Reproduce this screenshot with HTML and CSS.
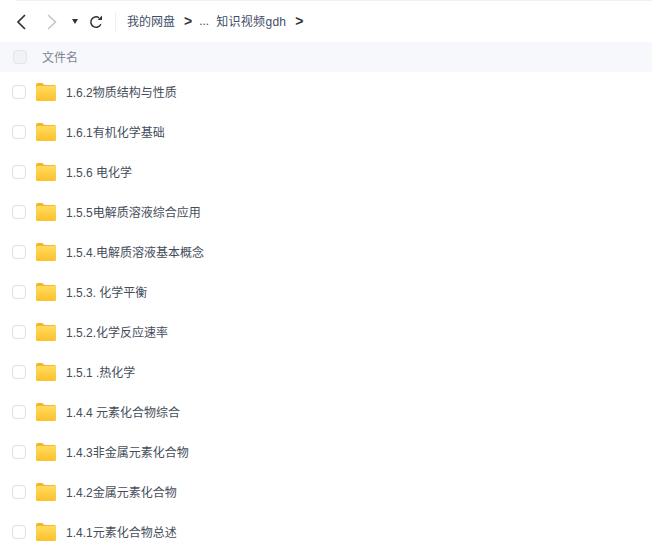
FILE: index.html
```html
<!DOCTYPE html>
<html lang="zh-CN">

<head>
    <meta charset="UTF-8">
    <title>我的网盘</title>
    <link rel="stylesheet" href="styles.css">
</head>

<body>
    <div class="toolbar">
        <div class="nav">
            <svg class="nav-back" width="12" height="16" viewBox="0 0 12 16"><path d="M9 1 2 8l7 7" fill="none" stroke="#333" stroke-width="1.7"/></svg>
            <svg class="nav-forward" width="12" height="16" viewBox="0 0 12 16"><path d="M2 1 9.5 8 2 15" fill="none" stroke="#c4c4c4" stroke-width="1.5"/></svg>
            <span class="nav-drop"></span>
            <svg class="nav-refresh" width="14" height="14" viewBox="0 0 14 14"><path d="M11.8 9.2A5.2 5.2 0 1 1 10 2.8" fill="none" stroke="#333" stroke-width="1.5"/><path d="M8.6 5h4.4V.6z" fill="#333"/></svg>
        </div>
        <div class="crumbs">
            <span>我的网盘</span>
            <span class="sep">&gt;</span>
            <span class="dots">...</span>
            <span class="last">知识视频gdh</span>
            <span class="sep">&gt;</span>
        </div>
    </div>

    <div class="list-head">
        <span class="check check-head"></span>
        <span class="head-name">文件名</span>
    </div>

    <div class="list">
        <div class="row"><span class="check"></span><svg class="folder"><use href="#folder"/></svg><span class="name">1.6.2物质结构与性质</span></div>
        <div class="row"><span class="check"></span><svg class="folder"><use href="#folder"/></svg><span class="name">1.6.1有机化学基础</span></div>
        <div class="row"><span class="check"></span><svg class="folder"><use href="#folder"/></svg><span class="name">1.5.6 电化学</span></div>
        <div class="row"><span class="check"></span><svg class="folder"><use href="#folder"/></svg><span class="name">1.5.5电解质溶液综合应用</span></div>
        <div class="row"><span class="check"></span><svg class="folder"><use href="#folder"/></svg><span class="name">1.5.4.电解质溶液基本概念</span></div>
        <div class="row"><span class="check"></span><svg class="folder"><use href="#folder"/></svg><span class="name">1.5.3. 化学平衡</span></div>
        <div class="row"><span class="check"></span><svg class="folder"><use href="#folder"/></svg><span class="name">1.5.2.化学反应速率</span></div>
        <div class="row"><span class="check"></span><svg class="folder"><use href="#folder"/></svg><span class="name">1.5.1 .热化学</span></div>
        <div class="row"><span class="check"></span><svg class="folder"><use href="#folder"/></svg><span class="name">1.4.4 元素化合物综合</span></div>
        <div class="row"><span class="check"></span><svg class="folder"><use href="#folder"/></svg><span class="name">1.4.3非金属元素化合物</span></div>
        <div class="row"><span class="check"></span><svg class="folder"><use href="#folder"/></svg><span class="name">1.4.2金属元素化合物</span></div>
        <div class="row"><span class="check"></span><svg class="folder"><use href="#folder"/></svg><span class="name">1.4.1元素化合物总述</span></div>
    </div>

    <!-- shared folder icon -->
    <svg width="0" height="0" class="defs">
        <defs>
            <linearGradient id="folder-front" x1="0" y1="0" x2="0" y2="1">
                <stop offset="0" stop-color="#ffdc62"/>
                <stop offset="1" stop-color="#fdc028"/>
            </linearGradient>
            <symbol id="folder" viewBox="0 0 20 18">
                <path d="M0 2a2 2 0 0 1 2-2h4.5l2 2H18a2 2 0 0 1 2 2v3H0z" fill="#f7b52c"/>
                <rect y="3" width="20" height="15" rx="1.6" fill="url(#folder-front)"/>
            </symbol>
        </defs>
    </svg>
</body>

</html>
```

FILE: styles.css
```css
html, body {
    height: 100%;
}

body {
    margin: 0;
    overflow: hidden;
    background-color: #fff;
    font-family: "Liberation Sans", "Noto Sans CJK SC", sans-serif;
    font-size: 12px;
    color: #454d5a;
}

.toolbar {
    height: 41px;
    margin-left: 16px;
    display: flex;
    align-items: center;
    border-top: 1px solid #f0f0f0;
}

.nav {
    display: flex;
    align-items: center;
    height: 20px;
    padding-right: 12px;
    border-right: 1px solid #eee;
}

.nav-forward {
    margin-left: 18px;
}

.nav-drop {
    width: 0;
    height: 0;
    margin-left: 14px;
    border-left: 3px solid transparent;
    border-right: 3px solid transparent;
    border-top: 5px solid #333;
}

.nav-refresh {
    margin-left: 11px;
}

.crumbs {
    display: flex;
    align-items: center;
    margin-left: 11px;
    padding-bottom: 2px;
    color: #424e67;
}

.sep {
    margin-left: 9px;
    font-size: 14px;
    font-weight: bold;
    color: #333;
}

.dots {
    margin-left: 7px;
}

.last {
    margin-left: 7px;
    letter-spacing: 0.3px;
}

.check {
    flex: none;
    box-sizing: border-box;
    width: 14px;
    height: 14px;
    border: 1px solid #dcdfe6;
    border-radius: 4px;
    background-color: #fff;
}

.check-head {
    background-color: #f1f2f6;
    border-color: #e2e4ea;
}

.list-head {
    height: 30px;
    padding-left: 13px;
    display: flex;
    align-items: center;
    background-color: #f7f8fb;
}

.head-name {
    margin-left: 15px;
    padding-bottom: 2px;
    color: #7d8494;
}

.row {
    height: 40px;
    padding-left: 12px;
    display: flex;
    align-items: center;
}

.folder {
    width: 20px;
    height: 18px;
    margin-left: 10px;
    flex: none;
}

.name {
    margin-left: 10px;
    padding-bottom: 2px;
}

.defs {
    position: absolute;
}
```
